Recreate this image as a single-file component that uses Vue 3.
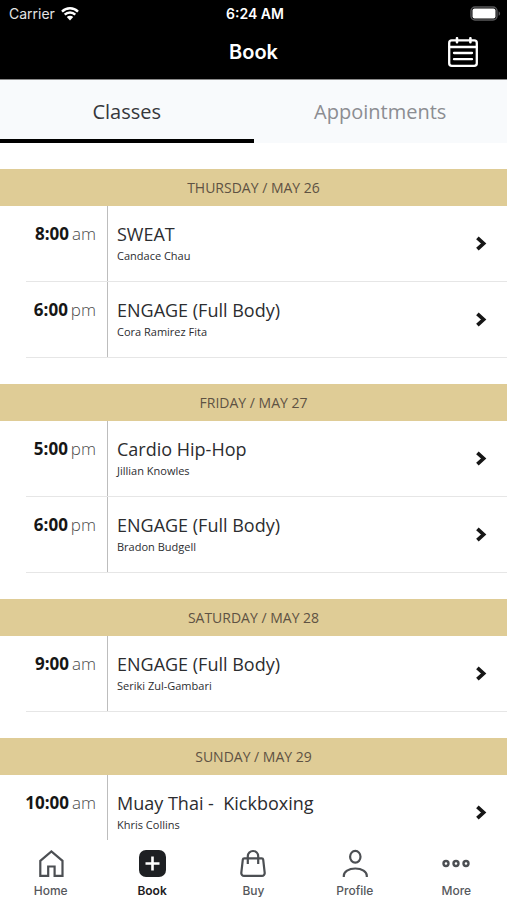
<script setup>
import { ref } from 'vue'

const tabs = ['Classes', 'Appointments']
const activeTab = ref('Classes')
const activeNav = ref('Book')

const days = [
  {
    label: 'THURSDAY / MAY 26',
    classes: [
      { time: '8:00', half: 'am', name: 'SWEAT', coach: 'Candace Chau' },
      { time: '6:00', half: 'pm', name: 'ENGAGE (Full Body)', coach: 'Cora Ramirez Fita' },
    ],
  },
  {
    label: 'FRIDAY / MAY 27',
    classes: [
      { time: '5:00', half: 'pm', name: 'Cardio Hip-Hop', coach: 'Jillian Knowles' },
      { time: '6:00', half: 'pm', name: 'ENGAGE (Full Body)', coach: 'Bradon Budgell' },
    ],
  },
  {
    label: 'SATURDAY / MAY 28',
    classes: [
      { time: '9:00', half: 'am', name: 'ENGAGE (Full Body)', coach: 'Seriki Zul-Gambari' },
    ],
  },
  {
    label: 'SUNDAY / MAY 29',
    classes: [
      { time: '10:00', half: 'am', name: 'Muay Thai -  Kickboxing', coach: 'Khris Collins' },
    ],
  },
]

const navItems = ['Home', 'Book', 'Buy', 'Profile', 'More']
</script>

<template>
  <div class="screen">
    <header class="top">
      <div class="status">
        <span class="carrier">
          Carrier
          <svg viewBox="0 0 18 14" width="18" height="14" aria-hidden="true">
            <path d="M1 4.6a11.4 11.4 0 0 1 16 0M3.7 7.700a7.500 7.500 0 0 1 10.600 0" fill="none" stroke="#fff" stroke-width="2.4" />
            <path d="M5.800 10a4.500 4.500 0 0 1 6.400 0L9 13.400z" fill="#fff" />
          </svg>
        </span>
        <span class="clock">6:24 AM</span>
        <span class="battery">
          <svg viewBox="0 0 31 15" width="31" height="15" aria-hidden="true">
            <rect x="1" y="1" width="26" height="13" rx="4" fill="none" stroke="#58585a" stroke-width="1.4" />
            <rect x="2.5" y="2.5" width="23" height="10" rx="2" fill="#fff" />
            <path d="M28.6 5.2c2 .9 2 3.7 0 4.6z" fill="#58585a" />
          </svg>
        </span>
      </div>
      <div class="titlebar">
        <h1>Book</h1>
        <button class="calendar" type="button" aria-label="Calendar">
          <svg viewBox="0 0 30 30" width="30" height="30" fill="none" stroke="#fff" stroke-width="2.3" stroke-linecap="round" aria-hidden="true">
            <rect x="1.2" y="3.4" width="27.6" height="25.4" rx="2.6" />
            <path d="M1.5 10h27" />
            <path d="M9 1.200v4M22.4 1.200v4" stroke-width="2.6" />
            <path d="M6 16h18M6 22.200h18" />
          </svg>
        </button>
      </div>
    </header>

    <div class="tabs" role="tablist">
      <button
        v-for="tab in tabs"
        :key="tab"
        class="tab"
        :class="{ active: tab === activeTab }"
        type="button"
        role="tab"
        :aria-selected="tab === activeTab"
        @click="activeTab = tab"
      >{{ tab }}</button>
    </div>

    <main class="schedule">
      <section v-for="day in days" :key="day.label" class="day">
        <h2>{{ day.label }}</h2>
        <a v-for="item in day.classes" :key="item.time + item.name" class="row" href="#">
          <span class="time"><b>{{ item.time }}</b><span class="half">{{ item.half }}</span></span>
          <span class="info">
            <span class="name">{{ item.name }}</span>
            <span class="coach">{{ item.coach }}</span>
          </span>
          <svg class="chevron" viewBox="0 0 12 16" width="12" height="16" aria-hidden="true">
            <path d="M2.400 1.800 8.600 7.500l-6.200 5.700" fill="none" stroke="#161616" stroke-width="3.7" />
          </svg>
        </a>
      </section>
    </main>

    <nav class="nav">
      <a
        v-for="item in navItems"
        :key="item"
        class="nav-item"
        :class="{ active: item === activeNav }"
        href="#"
        @click.prevent="activeNav = item"
      >
        <svg viewBox="0 0 28 28" width="28" height="28" fill="none" stroke="#4c4f53" stroke-width="2.2" stroke-linejoin="round" aria-hidden="true">
          <path v-if="item === 'Home'" d="M3.300 11.800 14.400 2.500l11.100 9.300v15h-7.900v-9.300h-6.400v9.300H3.300z" stroke-linejoin="miter" />
          <template v-else-if="item === 'Book'">
            <rect x="1" y="1" width="27" height="27" rx="7" fill="#1e2023" stroke="none" />
            <path d="M14.500 7.500v14M7.500 14.500h14" stroke="#fff" stroke-width="2.6" />
          </template>
          <template v-else-if="item === 'Buy'">
            <path d="M5.300 9.300h17.400a1.500 1.500 0 0 1 1.500 1.300l1.500 13.300a2.700 2.700 0 0 1-2.700 2.900H5a2.700 2.700 0 0 1-2.700-2.900l1.500-13.300a1.500 1.500 0 0 1 1.500-1.300z" />
            <path d="M8.800 15V7.200a5.200 5.200 0 0 1 10.400 0V15" />
          </template>
          <template v-else-if="item === 'Profile'">
            <ellipse cx="14.300" cy="7.800" rx="5.200" ry="5.900" />
            <path d="M2.800 28v-1.200c0-4.200 4.800-7.300 11.500-7.300s11.500 3.100 11.500 7.300V28" />
          </template>
          <g v-else stroke-width="2.4">
            <circle cx="4" cy="14.500" r="2.500" />
            <circle cx="14" cy="14.500" r="2.500" />
            <circle cx="24" cy="14.500" r="2.500" />
          </g>
        </svg>
        <span>{{ item }}</span>
      </a>
    </nav>
  </div>
</template>

<style>
body {
  margin: 0;
  background: #fff;
}
</style>

<style scoped>
* {
  box-sizing: border-box;
}

.screen {
  display: flex;
  flex-direction: column;
  height: 100vh;
  color: #2c2d30;
  background: #fff;
  font-family: 'Open Sans', 'Noto Sans', sans-serif;
}

button {
  padding: 0;
  border: 0;
  background: none;
  font: inherit;
  cursor: pointer;
}

a {
  color: inherit;
  text-decoration: none;
}

svg {
  display: block;
}

.top {
  flex: none;
  padding-bottom: 8px;
  color: #fff;
  background: #000;
  border-bottom: 1px solid #8a8a8a;
  font-family: Inter, 'Liberation Sans', sans-serif;
}

.status,
.titlebar {
  display: grid;
  grid-template-columns: 1fr auto 1fr;
  align-items: center;
}

.status {
  height: 27px;
  padding: 0 6px 0 9px;
  font-size: 14px;
}

.carrier {
  display: flex;
  align-items: center;
  gap: 6px;
  color: #e4e4e4;
}

.clock {
  font-weight: 600;
}

.battery {
  justify-self: end;
}

.titlebar {
  height: 44px;
  padding: 5px 29px 0;
}

h1 {
  grid-column: 2;
  margin: 0;
  font-size: 20px;
  font-weight: 600;
  line-height: 24px;
}

.calendar {
  justify-self: end;
}

.tabs {
  display: grid;
  flex: none;
  grid-template-columns: 1fr 1fr;
  background: #f8fafc;
}

.tab {
  height: 63px;
  padding-top: 4px;
  border-bottom: 4px solid transparent;
  color: #8c8d92;
  font-size: 20px;
}

.tab.active {
  border-color: #000;
  color: #36373b;
}

.schedule {
  display: flex;
  flex: 1;
  flex-direction: column;
  gap: 26px;
  min-height: 0;
  padding-top: 26px;
  overflow-y: auto;
  scrollbar-width: none;
}

.day {
  flex: none;
}

h2 {
  margin: 0;
  color: #5e5243;
  background: #dfcc96;
  font-size: 14px;
  font-weight: 400;
  line-height: 37px;
  text-align: center;
}

.row {
  display: flex;
  align-items: stretch;
  height: 76px;
  margin-left: 26px;
  padding-right: 20px;
  border-bottom: 1px solid #e6e6e6;
}

.time {
  display: flex;
  flex: none;
  align-items: baseline;
  justify-content: flex-end;
  gap: 3px;
  width: 82px;
  padding: 16px 11px 0 0;
  border-right: 1px solid #bdbdbd;
  font-size: 17px;
  line-height: 24px;
}

.time b {
  color: #161616;
  font-weight: 700;
}

.half {
  color: #4a4a4a;
  font-weight: 300;
}

.info {
  display: flex;
  flex: 1;
  flex-direction: column;
  min-width: 0;
  padding: 15px 0 0 9px;
}

.name {
  font-size: 18px;
  line-height: 26px;
  white-space: pre;
}

.coach {
  font-size: 11px;
  line-height: 18px;
}

.chevron {
  align-self: center;
}

.nav {
  display: grid;
  flex: none;
  grid-template-columns: repeat(5, 1fr);
  height: 60px;
  padding-top: 9px;
  background: #fff;
  font-family: Inter, 'Liberation Sans', sans-serif;
}

.nav-item {
  display: flex;
  flex-direction: column;
  align-items: center;
  gap: 6px;
  color: #56585c;
  font-size: 12px;
  font-weight: 500;
  line-height: 16px;
}

.nav-item.active {
  color: #1e2023;
  font-weight: 600;
}
</style>
